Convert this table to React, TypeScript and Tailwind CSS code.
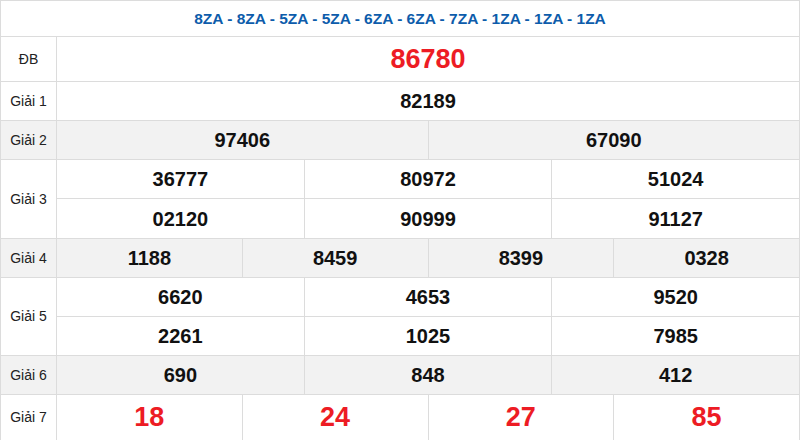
import React from "react";

const Label = ({ children, gray, span2 }: { children: React.ReactNode; gray?: boolean; span2?: boolean }) => (
  <div
    className={`flex items-center justify-center text-[14px] text-[#222] ${gray ? "bg-[#f2f2f2]" : "bg-white"} ${span2 ? "row-span-2" : ""}`}
  >
    {children}
  </div>
);

const Num = ({ children, gray, span, red }: { children: React.ReactNode; gray?: boolean; span: string; red?: boolean }) => (
  <div
    className={`flex items-center justify-center font-bold ${red ? "text-[27px] text-[#ed1c24]" : "text-[20px] text-[#111]"} ${gray ? "bg-[#f2f2f2]" : "bg-white"} ${span}`}
  >
    {children}
  </div>
);

export default function App() {
  return (
    <div
      className="w-[800px] h-[440px] overflow-hidden bg-white"
      style={{ fontFamily: '"Liberation Sans", Arial, sans-serif' }}
    >
      <div className="grid grid-cols-[55px_repeat(12,minmax(0,1fr))] grid-rows-[35px_44px_38px_38px_38px_39px_38px_38px_38px_38px_45px] gap-px bg-[#dcdcdc] p-px">
        <div className="col-span-full flex items-center justify-center bg-white text-[15.5px] font-bold text-[#0d5cab]">
          8ZA - 8ZA - 5ZA - 5ZA - 6ZA - 6ZA - 7ZA - 1ZA - 1ZA - 1ZA
        </div>

        <Label>ĐB</Label>
        <Num span="col-span-12" red>86780</Num>

        <Label>Giải 1</Label>
        <Num span="col-span-12">82189</Num>

        <Label gray>Giải 2</Label>
        <Num span="col-span-6" gray>97406</Num>
        <Num span="col-span-6" gray>67090</Num>

        <Label span2>Giải 3</Label>
        <Num span="col-span-4">36777</Num>
        <Num span="col-span-4">80972</Num>
        <Num span="col-span-4">51024</Num>
        <Num span="col-span-4">02120</Num>
        <Num span="col-span-4">90999</Num>
        <Num span="col-span-4">91127</Num>

        <Label gray>Giải 4</Label>
        <Num span="col-span-3" gray>1188</Num>
        <Num span="col-span-3" gray>8459</Num>
        <Num span="col-span-3" gray>8399</Num>
        <Num span="col-span-3" gray>0328</Num>

        <Label span2>Giải 5</Label>
        <Num span="col-span-4">6620</Num>
        <Num span="col-span-4">4653</Num>
        <Num span="col-span-4">9520</Num>
        <Num span="col-span-4">2261</Num>
        <Num span="col-span-4">1025</Num>
        <Num span="col-span-4">7985</Num>

        <Label gray>Giải 6</Label>
        <Num span="col-span-4" gray>690</Num>
        <Num span="col-span-4" gray>848</Num>
        <Num span="col-span-4" gray>412</Num>

        <Label>Giải 7</Label>
        <Num span="col-span-3" red>18</Num>
        <Num span="col-span-3" red>24</Num>
        <Num span="col-span-3" red>27</Num>
        <Num span="col-span-3" red>85</Num>
      </div>
    </div>
  );
}
